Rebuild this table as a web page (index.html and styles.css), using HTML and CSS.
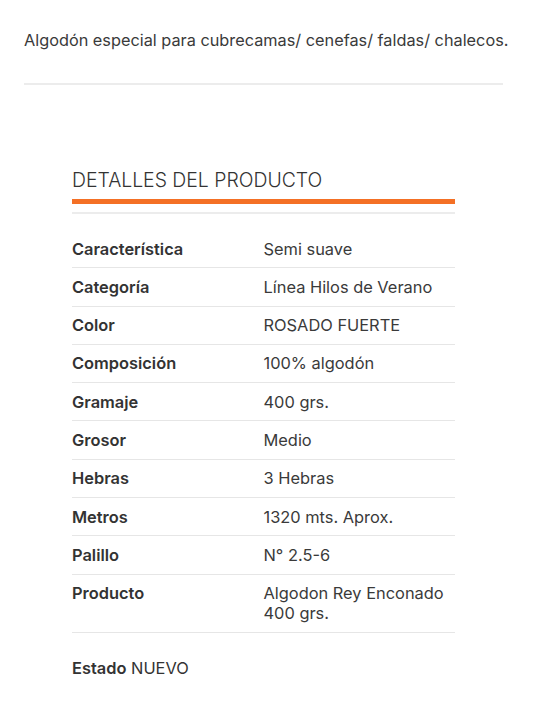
FILE: index.html
```
<!DOCTYPE html>
<html lang="es">
<head>
<meta charset="utf-8">
<link rel="stylesheet" href="styles.css">
</head>
<body>
<div class="page">
  <p class="desc">Algodón especial para cubrecamas/ cenefas/ faldas/ chalecos.</p>
  <hr class="sep">
  <section class="details">
    <div class="title-wrap">
      <h3 class="title">DETALLES DEL PRODUCTO</h3>
    </div>
    <dl class="specs">
      <div class="row"><dt>Característica</dt><dd>Semi suave</dd></div>
      <div class="row"><dt>Categoría</dt><dd>Línea Hilos de Verano</dd></div>
      <div class="row"><dt>Color</dt><dd>ROSADO FUERTE</dd></div>
      <div class="row"><dt>Composición</dt><dd>100% algodón</dd></div>
      <div class="row"><dt>Gramaje</dt><dd>400 grs.</dd></div>
      <div class="row"><dt>Grosor</dt><dd>Medio</dd></div>
      <div class="row"><dt>Hebras</dt><dd>3 Hebras</dd></div>
      <div class="row"><dt>Metros</dt><dd>1320 mts. Aprox.</dd></div>
      <div class="row"><dt>Palillo</dt><dd>N° 2.5-6</dd></div>
      <div class="row"><dt>Producto</dt><dd>Algodon Rey Enconado 400 grs.</dd></div>
    </dl>
    <p class="state"><strong>Estado</strong> NUEVO</p>
  </section>
</div>
</body>
</html>
```
FILE: styles.css
```
html,body{margin:0;padding:0;background:#fff;}
body{font-family:Inter,"Noto Sans",sans-serif;color:#333;}
.page{padding:28px 30px 0 24px;}
.desc{margin:0;font-size:16.3px;line-height:24px;color:#3a3a3a;white-space:nowrap;}
.sep{margin:31px 0 0;border:0;border-top:2px solid #ececec;height:0;}
.details{padding:83px 48px 0 48px;}
.title-wrap{border-bottom:2px solid #ececec;padding-bottom:8px;}
.title{margin:0;font-size:19.4px;font-weight:300;line-height:24px;color:#333;padding-bottom:7px;border-bottom:5px solid #f47025;letter-spacing:0;}
.specs{margin:16px 0 0;padding:0;}
.row{display:grid;grid-template-columns:1fr 1fr;border-bottom:1px solid #e6e6e6;padding:8.65px 0;}
.row dt{font-weight:600;font-size:16.4px;line-height:20px;color:#333;}
.row dd{margin:0;font-size:16.4px;line-height:20px;color:#3a3a3a;}
.state{margin:25px 0 0;font-size:16.4px;line-height:20px;color:#333;}
.state strong{font-weight:600;}
```
